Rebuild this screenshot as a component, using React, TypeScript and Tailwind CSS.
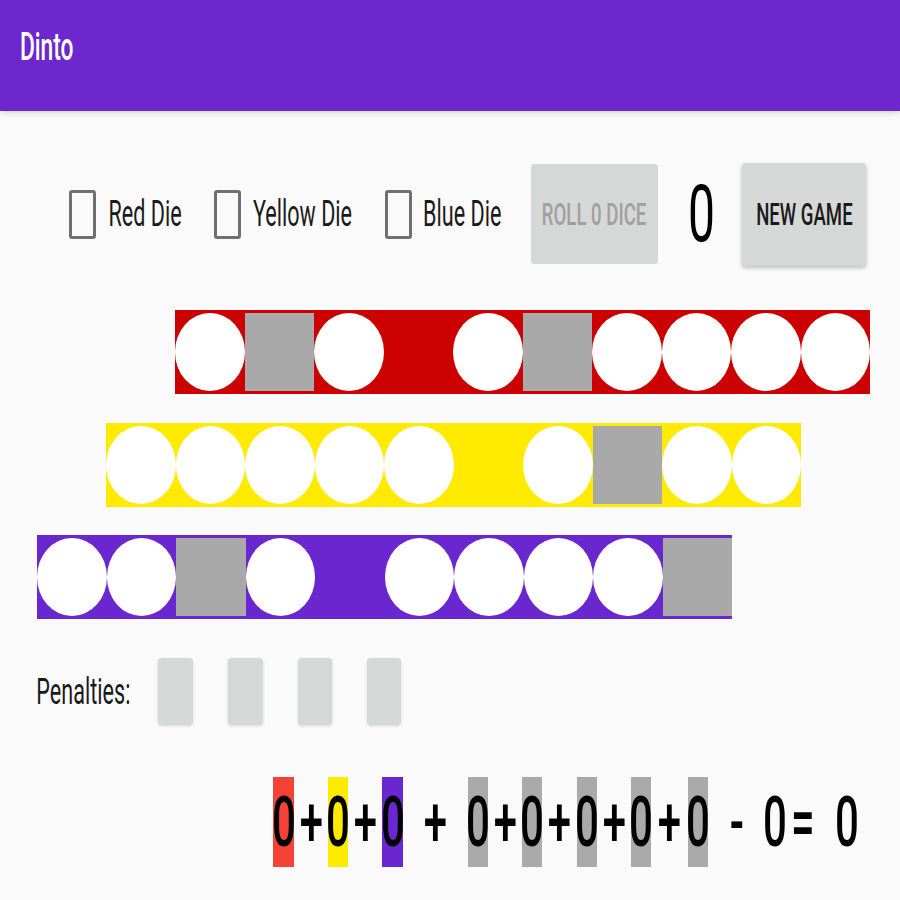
import React from "react";

type Cell = "C" | "S" | "E";

const rows: { bg: string; ml: string; mt: string; cells: Cell[] }[] = [
  { bg: "bg-[#cc0000]", ml: "ml-[175px]", mt: "mt-[44px]", cells: ["C", "S", "C", "E", "C", "S", "C", "C", "C", "C"] },
  { bg: "bg-[#ffea00]", ml: "ml-[106px]", mt: "mt-[29px]", cells: ["C", "C", "C", "C", "C", "E", "C", "S", "C", "C"] },
  { bg: "bg-[#6a27cf]", ml: "ml-[37px]", mt: "mt-[28px]", cells: ["C", "C", "S", "C", "E", "C", "C", "C", "C", "S"] },
];

function Sq({ children, className = "" }: { children: React.ReactNode; className?: string }) {
  return <span className={`inline-block scale-x-[0.6] whitespace-nowrap leading-none ${className}`}>{children}</span>;
}

function CheckItem({ label, textW, ml }: { label: string; textW: string; ml: string }) {
  return (
    <div className={`flex items-center ${ml}`}>
      <div className="w-[27px] h-[49px] border-[3px] border-[#707070] rounded-[3px]" />
      <div className={`ml-[12px] flex justify-center ${textW}`}>
        <Sq className="text-[36px] text-[#1a1a1a]">{label}</Sq>
      </div>
    </div>
  );
}

function Box({ w, bg = "", children }: { w: string; bg?: string; children: React.ReactNode }) {
  return (
    <div className={`h-[90px] flex items-center justify-center ${w} ${bg}`}>
      <Sq className="text-[70px] font-medium text-black">{children}</Sq>
    </div>
  );
}

export default function App() {
  return (
    <div className="min-h-[900px] w-[900px] bg-[#fafafa] font-[Roboto] overflow-hidden">
      <div className="h-[111px] bg-[#6c27cf] shadow-md pl-[22px] pt-[28px] flex items-start">
        <div className="w-[50px] flex justify-center">
          <Sq className="text-[38px] font-medium text-white">Dinto</Sq>
        </div>
      </div>

      <div className="mt-[51px] h-[104px] flex items-center pl-[69px]">
        <CheckItem label="Red Die" textW="w-[73px]" ml="ml-0" />
        <CheckItem label="Yellow Die" textW="w-[99px]" ml="ml-[33px]" />
        <CheckItem label="Blue Die" textW="w-[77px]" ml="ml-[33px]" />
        <div className="ml-[30px] w-[127px] h-[100px] bg-[#d6d7d7] rounded-[3px] flex items-center justify-center">
          <Sq className="text-[31px] font-medium text-[#a0a0a0]">ROLL 0 DICE</Sq>
        </div>
        <div className="ml-[32px] w-[22px] flex justify-center">
          <Sq className="text-[80px] text-black">0</Sq>
        </div>
        <div className="ml-[30px] w-[124px] h-[103px] bg-[#d6d7d7] rounded-[3px] shadow-[0_2px_4px_rgba(0,0,0,0.25)] flex items-center justify-center">
          <Sq className="text-[31px] font-medium text-[#1a1a1a]">NEW GAME</Sq>
        </div>
      </div>

      {rows.map((r, i) => (
        <div key={i} className={`flex h-[84px] w-[695px] ${r.bg} ${r.ml} ${r.mt}`}>
          {r.cells.map((c, j) => (
            <div key={j} className="w-[69.5px] h-full py-[3px]">
              {c === "C" && <div className="w-full h-full rounded-[50%] bg-white" />}
              {c === "S" && <div className="w-full h-full bg-[#a9a9a9]" />}
            </div>
          ))}
        </div>
      ))}

      <div className="mt-[39px] flex items-center pl-[37px] h-[67px]">
        <div className="w-[93px] flex justify-center">
          <Sq className="text-[36px] text-[#1a1a1a]">Penalties:</Sq>
        </div>
        <div className="ml-[28px] w-[35px] h-[67px] bg-[#d6d7d7] rounded-[4px] shadow-[0_1px_3px_rgba(0,0,0,0.15)]" />
        <div className="ml-[35px] w-[35px] h-[67px] bg-[#d6d7d7] rounded-[4px] shadow-[0_1px_3px_rgba(0,0,0,0.15)]" />
        <div className="ml-[35px] w-[34px] h-[67px] bg-[#d6d7d7] rounded-[4px] shadow-[0_1px_3px_rgba(0,0,0,0.15)]" />
        <div className="ml-[35px] w-[34px] h-[67px] bg-[#d6d7d7] rounded-[4px] shadow-[0_1px_3px_rgba(0,0,0,0.15)]" />
      </div>

      <div className="mt-[52px] flex items-center pl-[273px]">
        <Box w="w-[21px]" bg="bg-[#f44336]">0</Box>
        <Box w="w-[34px]">+</Box>
        <Box w="w-[20px]" bg="bg-[#ffeb00]">0</Box>
        <Box w="w-[34px]">+</Box>
        <Box w="w-[21px]" bg="bg-[#6a27cf]">0</Box>
        <Box w="w-[65px]">+</Box>
        <Box w="w-[20px]" bg="bg-[#aaaaaa]">0</Box>
        <Box w="w-[34px]">+</Box>
        <Box w="w-[20px]" bg="bg-[#aaaaaa]">0</Box>
        <Box w="w-[35px]">+</Box>
        <Box w="w-[20px]" bg="bg-[#aaaaaa]">0</Box>
        <Box w="w-[34px]">+</Box>
        <Box w="w-[20px]" bg="bg-[#aaaaaa]">0</Box>
        <Box w="w-[37px]">+</Box>
        <Box w="w-[20px]" bg="bg-[#aaaaaa]">0</Box>
        <Box w="w-[57px]">-</Box>
        <Box w="w-[20px]">0</Box>
        <Box w="w-[35px]">=</Box>
        <Box w="w-[53px]">0</Box>
      </div>
    </div>
  );
}
